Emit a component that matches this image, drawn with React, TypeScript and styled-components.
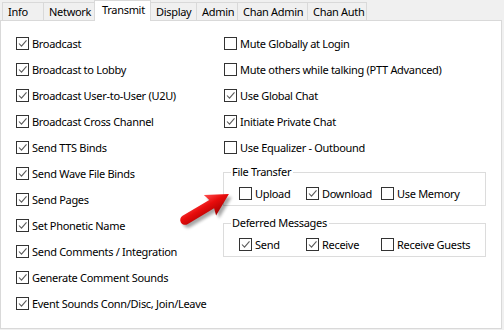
import React from "react";
import styled, { createGlobalStyle } from "styled-components";

const Global = createGlobalStyle`
  html, body { margin: 0; padding: 0; background: #f0f0f0; }
  body {
    font-family: "Noto Sans", "Open Sans", sans-serif;
    font-size: 11px;
    letter-spacing: -0.3px;
    color: #000;
  }
  * { box-sizing: border-box; }
`;

const Window = styled.div`
  width: 504px;
  height: 330px;
  background: #f0f0f0;
  position: relative;
`;

const TabBar = styled.div`
  display: flex;
  align-items: flex-end;
  height: 20px;
  padding-left: 2px;
`;

const Tab = styled.div<{ $w: number; $active?: boolean }>`
  width: ${(p) => p.$w}px;
  height: ${(p) => (p.$active ? 21 : 18)}px;
  margin-bottom: ${(p) => (p.$active ? -1 : 0)}px;
  margin-right: -1px;
  border: 1px solid #d9d9d9;
  border-bottom: none;
  background: ${(p) => (p.$active ? "#ffffff" : "#f0f0f0")};
  position: relative;
  z-index: ${(p) => (p.$active ? 2 : 1)};
  display: flex;
  align-items: center;
  padding-left: ${(p) => (p.$active ? 7 : 5)}px;
  padding-bottom: ${(p) => (p.$active ? 3 : 0)}px;
  white-space: nowrap;
`;

const Panel = styled.div`
  position: relative;
  width: 502px;
  height: 309px;
  border: 1px solid #d9d9d9;
  background: #fff;
  display: grid;
  grid-template-columns: 208px 262px;
  padding: 9px 0 0 15px;
  align-content: start;
`;

const Column = styled.div`
  display: flex;
  flex-direction: column;
`;

const Row = styled.label`
  display: flex;
  align-items: center;
  height: 26px;
  gap: 3px;
  white-space: nowrap;
`;

const Box = styled.span`
  width: 13px;
  height: 13px;
  border: 1px solid #333333;
  background: #fff;
  flex: none;
  position: relative;
`;

const Tick = styled.svg`
  position: absolute;
  left: -1px;
  top: -1px;
`;

const Group = styled.div<{ $mt: number }>`
  position: relative;
  margin-top: ${(p) => p.$mt}px;
  margin-left: -1px;
  width: 263px;
  height: 34px;
  border: 1px solid #dcdcdc;
  display: grid;
  grid-template-columns: 67px 75px auto;
  padding: 11px 0 0 15px;
  align-content: start;
`;

const Legend = styled.span`
  position: absolute;
  left: 7px;
  top: -9px;
  padding: 0 2px 0 1px;
  background: #fff;
  line-height: 16px;
  white-space: nowrap;
`;

const GroupRow = styled(Row)`
  height: 18px;
`;

const ArrowSvg = styled.svg`
  position: absolute;
  left: 165px;
  top: 155px;
`;

function Check({ on }: { on?: boolean }) {
  return (
    <Box>
      {on && (
        <Tick width="13" height="13" viewBox="0 0 13 13">
          <path d="M3 6.5 L5.5 9.2 L10.5 3.3" fill="none" stroke="#5b5b5b" strokeWidth="1.1" />
        </Tick>
      )}
    </Box>
  );
}

const tabs: [string, number][] = [
  ["Info", 42],
  ["Network", 52],
  ["Transmit", 57],
  ["Display", 47],
  ["Admin", 42],
  ["Chan Admin", 71],
  ["Chan Auth", 60],
];

const left: [string, boolean][] = [
  ["Broadcast", true],
  ["Broadcast to Lobby", true],
  ["Broadcast User-to-User (U2U)", true],
  ["Broadcast Cross Channel", true],
  ["Send TTS Binds", true],
  ["Send Wave File Binds", true],
  ["Send Pages", true],
  ["Set Phonetic Name", true],
  ["Send Comments / Integration", true],
  ["Generate Comment Sounds", true],
  ["Event Sounds Conn/Disc, Join/Leave", true],
];

const right: [string, boolean][] = [
  ["Mute Globally at Login", false],
  ["Mute others while talking (PTT Advanced)", false],
  ["Use Global Chat", true],
  ["Initiate Private Chat", true],
  ["Use Equalizer - Outbound", false],
];

const arrowPath =
  "M0 -4.8 L31 -4.8 L29 -12 L51 0 L29 12 L31 4.8 L0 4.8 A4.8 4.8 0 0 1 0 -4.8 Z";

export default function App() {
  return (
    <Window>
      <Global />
      <TabBar>
        {tabs.map(([t, w]) => (
          <Tab key={t} $w={w} $active={t === "Transmit"}>
            {t}
          </Tab>
        ))}
      </TabBar>
      <Panel>
        <Column>
          {left.map(([t, on]) => (
            <Row key={t}>
              <Check on={on} />
              {t}
            </Row>
          ))}
        </Column>
        <Column>
          {right.map(([t, on]) => (
            <Row key={t}>
              <Check on={on} />
              {t}
            </Row>
          ))}
          <Group $mt={12}>
            <Legend>File Transfer</Legend>
            <GroupRow>
              <Check />
              Upload
            </GroupRow>
            <GroupRow>
              <Check on />
              Download
            </GroupRow>
            <GroupRow>
              <Check />
              Use Memory
            </GroupRow>
          </Group>
          <Group $mt={17}>
            <Legend>Deferred Messages</Legend>
            <GroupRow>
              <Check on />
              Send
            </GroupRow>
            <GroupRow>
              <Check on />
              Receive
            </GroupRow>
            <GroupRow>
              <Check />
              Receive Guests
            </GroupRow>
          </Group>
        </Column>
        <ArrowSvg width="90" height="75" viewBox="0 0 90 75">
          <defs>
            <linearGradient id="ag" x1="0" y1="-12" x2="0" y2="12" gradientUnits="userSpaceOnUse">
              <stop offset="0" stopColor="#ff5050" />
              <stop offset="0.45" stopColor="#e80c0c" />
              <stop offset="1" stopColor="#a30000" />
            </linearGradient>
            <filter id="blur" x="-30%" y="-30%" width="160%" height="160%">
              <feGaussianBlur stdDeviation="1.6" />
            </filter>
          </defs>
          <g transform="translate(19,44) rotate(-30.6)">
            <path d={arrowPath} fill="#000" opacity="0.35" filter="url(#blur)" transform="translate(1,4)" />
            <path d={arrowPath} fill="url(#ag)" />
          </g>
        </ArrowSvg>
      </Panel>
    </Window>
  );
}
